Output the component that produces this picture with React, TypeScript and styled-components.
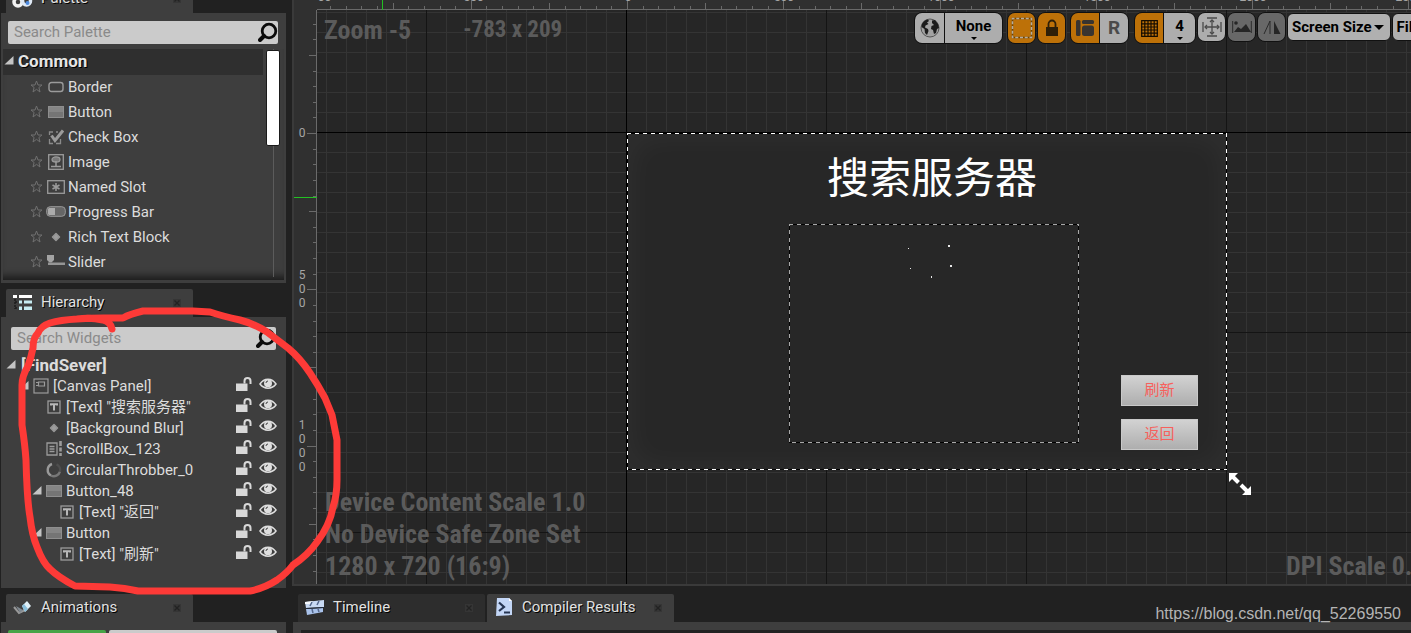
import React from "react";
import styled, { createGlobalStyle, css } from "styled-components";

const Global = createGlobalStyle`
  *, *::before, *::after { box-sizing: border-box; }
  html, body, #root { height: 100%; }
  body {
    margin: 0;
    background: #212121;
    color: #dcdcdc;
    font-family: Roboto, "Noto Sans CJK SC", sans-serif;
    font-size: 15px;
    line-height: 20px;
    overflow: hidden;
  }
  button, input { font: inherit; color: inherit; }
  button { border: 0; padding: 0; background: none; cursor: pointer; }
  ul { list-style: none; margin: 0; padding: 0; }
  svg { display: block; flex: none; }
`;

const panelGrey = "#3e3e3e";
const condensed = '"Roboto Condensed", "Liberation Sans Narrow", Roboto, sans-serif';

/* ---------- page frame ---------- */

const Editor = styled.div`
  position: relative;
  display: grid;
  grid-template-columns: 286px minmax(0, 1fr);
  column-gap: 6px;
  height: 100vh;
  overflow: hidden;
`;

const SideColumn = styled.div`
  display: flex;
  flex-direction: column;
  gap: 6px;
  padding-left: 1px;
  min-height: 0;
`;

const MainColumn = styled.div`
  display: flex;
  flex-direction: column;
  gap: 8px;
  min-width: 0;
  min-height: 0;
`;

const Dock = styled.section<{ $grow?: boolean; $cut?: boolean }>`
  display: flex;
  flex-direction: column;
  flex: ${(p) => (p.$grow ? "1 1 0" : "none")};
  min-height: 0;
  ${(p) => p.$cut && css`margin-top: -15px;`}
`;

const TabStrip = styled.div<{ $inset?: number }>`
  display: flex;
  gap: 2px;
  padding-left: ${(p) => p.$inset ?? 5}px;
`;

const TabBox = styled.div<{ $active: boolean }>`
  display: flex;
  align-items: center;
  width: 187px;
  height: 28px;
  padding: 0 10px 0 6px;
  border-radius: 2px 2px 0 0;
  background: ${(p) => (p.$active ? panelGrey : "#2d2d2d")};
`;

const TabLabel = styled.button`
  display: flex;
  align-items: center;
  gap: 7px;
  flex: 1;
  height: 24px;
  padding-bottom: 2px;
  text-align: left;
  color: #e2e2e2;
  text-shadow: 1px 1px 0 #000;
`;

const CloseButton = styled.button`
  width: 12px;
  height: 12px;
`;

const Panel = styled.div`
  flex: 1;
  min-height: 0;
  background: ${panelGrey};
`;

/* ---------- search ---------- */

const SearchBox = styled.label`
  display: flex;
  align-items: center;
  height: 23px;
  padding: 0 0 2px 6px;
  border-radius: 2px;
  background: #cbcbcb;
`;

const SearchInput = styled.input`
  flex: 1;
  min-width: 0;
  padding: 0;
  border: 0;
  outline: 0;
  background: transparent;
  color: #222;
  &::placeholder { color: #8a8a8a; opacity: 1; }
`;

/* ---------- palette ---------- */

const PalettePanel = styled(Panel)`
  display: flex;
  flex-direction: column;
  padding: 8px 2px 3px;
`;

const PaletteSearch = styled.div`
  padding: 0 6px 0 5px;
`;

const PaletteScroll = styled.div`
  display: flex;
  height: 231px;
  margin-top: 5px;
  box-shadow: inset 0 -9px 7px -5px #1c1c1c;
`;

const PaletteList = styled.div`
  width: 260px;
`;

const GroupHeader = styled.button`
  display: flex;
  align-items: center;
  gap: 4px;
  width: 100%;
  height: 26px;
  padding: 0 0 2px 1px;
  background: #2f2f2f;
  color: #e6e6e6;
  font-size: 17px;
  font-weight: 700;
  text-shadow: 1px 1px 0 #000;
`;

const PaletteItem = styled.button`
  display: flex;
  align-items: center;
  width: 100%;
  height: 25px;
  padding: 0 0 2px 27px;
  text-align: left;
`;

const IconSlot = styled.span<{ $w: number }>`
  display: flex;
  flex: none;
  align-items: center;
  justify-content: center;
  width: ${(p) => p.$w}px;
`;

const ScrollTrack = styled.div`
  width: 14px;
  height: 228px;
  margin-left: 3px;
  padding-top: 1px;
  background: linear-gradient(#5c5c5c, #5c5c5c) 7px 0 / 1px 100% no-repeat;
`;

const ScrollThumb = styled.div`
  height: 96px;
  border: 1px solid #1b1b1b;
  border-radius: 2px;
  background: #fff;
`;

/* ---------- hierarchy ---------- */

const HierarchyPanel = styled(Panel)`
  padding: 10px 9px 0 5px;
`;

const HierarchySearch = styled.div`
  padding: 0 1px 0 5px;
`;

const TreeRoot = styled.button`
  display: flex;
  align-items: center;
  gap: 5px;
  height: 20px;
  margin-top: 5px;
  font-size: 17px;
  font-weight: 700;
`;

const TreeRow = styled.li<{ $depth: number }>`
  display: flex;
  align-items: center;
  height: 21px;
  padding-left: ${(p) => p.$depth * 13}px;
`;

const TreeName = styled.button`
  flex: 1;
  text-align: left;
  white-space: nowrap;
`;

const RowTools = styled.span`
  display: flex;
  gap: 7px;
  padding-bottom: 4px;
`;

/* ---------- viewport ---------- */

const Viewport = styled.section`
  display: grid;
  flex: 1 1 0;
  min-height: 0;
  grid-template-columns: 23px minmax(0, 1fr);
  grid-template-rows: 10px minmax(0, 1fr);
  border-left: 2px solid #3a3a3a;
  border-bottom: 2px solid #3a3a3a;
  background: #303030;
`;

const RulerSvg = styled.svg`
  width: 100%;
  height: 100%;
  overflow: hidden;
  font-size: 12px;
  fill: #a6a6a6;
  text-anchor: middle;
`;

const Canvas = styled.div`
  position: relative;
  overflow: hidden;
  background-color: #262626;
  background-image:
    linear-gradient(#000, #000),
    linear-gradient(#000, #000),
    linear-gradient(90deg, #141414 1px, transparent 1px),
    linear-gradient(#141414 1px, transparent 1px),
    linear-gradient(90deg, #343434 1px, transparent 1px),
    linear-gradient(#343434 1px, transparent 1px);
  background-size: 1px 100%, 100% 1px, 200px 200px, 200px 200px, 20px 20px, 20px 20px;
  background-position: 309px 0, 0 122px, 309px 122px, 309px 122px, 309px 122px, 309px 122px;
  background-repeat: no-repeat, no-repeat, repeat, repeat, repeat, repeat;
`;

const CanvasInfo = styled.div`
  position: absolute;
  font-family: ${condensed};
  font-size: 26px;
  font-weight: 700;
  line-height: 32px;
  color: #5b5b5b;
  white-space: nowrap;
`;

const ZoomInfo = styled(CanvasInfo)`
  display: flex;
  align-items: center;
  gap: 52px;
  top: 4px;
  left: 7px;
`;

const CursorInfo = styled.span`
  font-size: 23px;
`;

const DeviceInfo = styled(CanvasInfo)`
  left: 8px;
  bottom: 2px;
`;

const DpiInfo = styled(CanvasInfo)`
  left: calc(100% - 125px);
  bottom: 2px;
`;

const Toolbar = styled.div`
  position: absolute;
  top: 2px;
  right: 0;
  display: flex;
  align-items: flex-start;
  width: 497px;
  gap: 1px;
  overflow: hidden;
`;

const ToolGroup = styled.div<{ $gap?: number }>`
  display: flex;
  flex: none;
  height: 32px;
  margin-right: ${(p) => p.$gap ?? 0}px;
  border: 1px solid #111;
  border-radius: 8px;
  overflow: hidden;
  background: #111;
  gap: 1px;
`;

const ToolButton = styled.button<{ $w: number; $tone?: "orange" | "dim" }>`
  display: flex;
  flex-direction: column;
  align-items: center;
  justify-content: center;
  gap: 2px;
  width: ${(p) => p.$w}px;
  background: ${(p) => (p.$tone === "orange" ? "#bd7108" : p.$tone === "dim" ? "#686868" : "#adadad")};
  color: #000;
  font-weight: 700;
  line-height: 18px;
`;

const SmallTool = styled(ToolGroup)`
  height: 30px;
`;

const RLetter = styled.span`
  font-size: 19px;
  color: #4a4a4a;
`;

const MenuButton = styled.button`
  display: flex;
  flex: none;
  align-items: center;
  gap: 2px;
  height: 28px;
  margin-top: 1px;
  padding: 0 6px 0 4px;
  border: 1px solid #111;
  border-radius: 6px;
  background: #b0b0b0;
  color: #000;
  font-weight: 700;
  white-space: nowrap;
`;

/* ---------- widget being designed ---------- */

const Artboard = styled.div`
  position: absolute;
  left: 310px;
  top: 123px;
  width: 600px;
  height: 337px;
  background: #272727;
  box-shadow: inset 0 0 36px rgba(255, 255, 255, 0.05);
`;

const Outline = styled.svg`
  position: absolute;
  inset: 0;
  width: 100%;
  height: 100%;
`;

const ArtTitle = styled.h1`
  position: absolute;
  left: 200px;
  top: 12px;
  margin: 0;
  font-family: "Noto Sans CJK SC", sans-serif;
  font-size: 42px;
  font-weight: 400;
  line-height: 60px;
  color: #fff;
`;

const ScrollArea = styled.div`
  position: absolute;
  left: 162px;
  top: 91px;
  width: 290px;
  height: 219px;
`;

const ArtButtons = styled.div`
  position: absolute;
  left: 494px;
  top: 242px;
  display: grid;
  gap: 13px;
`;

const ArtButton = styled.button`
  width: 77px;
  height: 31px;
  padding-bottom: 3px;
  border: 1px solid #c9c9c9;
  background: linear-gradient(#d2d2d2, #aeaeae);
  color: #f7605c;
  font-family: "Noto Sans CJK SC", sans-serif;
`;

const ResizeHandle = styled.svg`
  position: absolute;
  left: 912px;
  top: 463px;
`;

/* ---------- bottom docks ---------- */

const AnimationsPanel = styled(Panel)`
  display: flex;
  gap: 3px;
  height: 11px;
  flex: none;
  padding: 8px 9px 0 7px;
  overflow: hidden;
`;

const AddAnimation = styled.button`
  width: 98px;
  height: 23px;
  border-radius: 2px;
  background: #47a447;
`;

const AnimationFilter = styled.input`
  flex: 1;
  min-width: 0;
  height: 23px;
  border: 0;
  border-radius: 2px;
  background: #cbcbcb;
`;

const ResultsPanel = styled(Panel)`
  flex: none;
  height: 11px;
  margin-left: 1px;
  padding: 8px 0 0 8px;
  overflow: hidden;
`;

const ResultsLog = styled.div`
  height: 40px;
  background: #222;
`;

const Watermark = styled.a`
  position: absolute;
  right: 10px;
  bottom: 9px;
  font-family: "Liberation Sans", Arial, sans-serif;
  font-size: 16px;
  color: #b4b4b4;
  text-decoration: none;
`;

const Annotation = styled.svg`
  position: absolute;
  left: 0;
  top: 0;
  pointer-events: none;
`;

/* ---------- icons ---------- */

const Magnifier = () => (
  <svg width="20" height="20" viewBox="0 0 20 20" fill="none" stroke="#0b0b0b">
    <circle cx="11" cy="9" r="6.8" strokeWidth="2.8" />
    <path d="M6 14 2 18" strokeWidth="4" strokeLinecap="round" />
  </svg>
);

const Expander = ({ hidden = false }: { hidden?: boolean }) => (
  <svg width="10" height="10" viewBox="0 0 10 10">
    {!hidden && <path d="M9.5 0V8.500H.5z" fill="#c4c4c4" />}
  </svg>
);

const Star = () => (
  <svg width="13" height="13" viewBox="0 0 13 13" fill="none" stroke="#707070">
    <path d="M6.5 1 8 5h4L8.900 7.500 10 12 6.500 9.300 3 12 4.100 7.500 1 5h4z" />
  </svg>
);

const Cross = () => (
  <svg width="12" height="12" viewBox="0 0 12 12">
    <path d="M2 2h8v8H2z" fill="#353535" />
    <path d="M3.500 3.500l5 5M8.500 3.500l-5 5" stroke="#222" strokeWidth="1.300" />
  </svg>
);

type Kind =
  | "border" | "button" | "check" | "image" | "slot" | "progress" | "dot" | "slider"
  | "canvas" | "text" | "scroll" | "throbber";

const WidgetIcon = ({ kind }: { kind: Kind }) => {
  switch (kind) {
    case "border":
      return <svg width="16" height="12" viewBox="0 0 16 12"><rect x="1" y="1.500" width="14" height="9" rx="2.500" fill="none" stroke="#9b9b9b" strokeWidth="1.400" /></svg>;
    case "button":
      return (
        <svg width="16" height="12" viewBox="0 0 16 12">
          <rect x=".5" y=".5" width="15" height="11" fill="#858585" stroke="#8e8e8e" />
          <path d="M1 6h14v5H1z" fill="#757575" />
        </svg>
      );
    case "check":
      return (
        <svg width="16" height="16" viewBox="0 0 16 16" fill="none" stroke="#9b9b9b">
          <path d="M5 3H1.500V6M1.500 10v4.500H5M8 14.500h4.500V10M8 3h2" stroke="#8a8a8a" strokeWidth="1.300" />
          <path d="M3.500 6.500l3.500 5L15 1.500" strokeWidth="3" />
        </svg>
      );
    case "image":
      return (
        <svg width="16" height="16" viewBox="0 0 16 16" fill="none" stroke="#9b9b9b">
          <rect x=".7" y=".7" width="14.600" height="14.600" strokeWidth="1.300" />
          <ellipse cx="8" cy="5.500" rx="4" ry="2.600" fill="#777" strokeWidth="1.200" />
          <path d="M8 7v5M3 12.500h10" strokeWidth="1.500" />
        </svg>
      );
    case "slot":
      return (
        <svg width="18" height="14" viewBox="0 0 18 14" fill="none" stroke="#9b9b9b">
          <rect x=".7" y=".7" width="16.600" height="12.600" strokeWidth="1.300" />
          <path d="M9 3v8M5.500 5l7 4M12.500 5l-7 4" strokeWidth="1.500" />
        </svg>
      );
    case "progress":
      return (
        <svg width="20" height="11" viewBox="0 0 20 11">
          <rect x=".7" y=".7" width="18.600" height="9.600" rx="3.500" fill="#666" stroke="#9a9a9a" />
          <path d="M3 2h6v7H3a2 2 0 0 1-1-1V3z" fill="#ababab" />
        </svg>
      );
    case "dot":
      return <svg width="10" height="10" viewBox="0 0 10 10"><path d="M5 1.500 8.500 5 5 8.500 1.500 5z" fill="#9d9d9d" stroke="#959595" strokeWidth="1.500" strokeLinejoin="round" /></svg>;
    case "slider":
      return (
        <svg width="18" height="14" viewBox="0 0 18 14" fill="#a3a3a3">
          <path d="M0 0h7v5L4.500 7.500h-2L0 5z" />
          <path d="M1 7.500h17v2.500H1z" fill="#959595" />
        </svg>
      );
    case "canvas":
      return (
        <svg width="16" height="16" viewBox="0 0 16 16" fill="none" stroke="#9b9b9b">
          <rect x="1" y="1" width="14" height="14" strokeWidth="1.200" />
          <path d="M3 4.500h2M3 7.500h2M5.500 4h6v4h-6z" strokeWidth="1.200" />
        </svg>
      );
    case "text":
      return (
        <svg width="14" height="14" viewBox="0 0 14 14" fill="none" stroke="#9b9b9b">
          <rect x="1" y="1" width="12" height="12" strokeWidth="1.300" />
          <path d="M4 5.500V4.300h6v1.200M7 4v6.500" stroke="#b8b8b8" strokeWidth="2" />
        </svg>
      );
    case "scroll":
      return (
        <svg width="17" height="16" viewBox="0 0 17 16" fill="none" stroke="#9b9b9b">
          <path d="M1 2h10v12H1zM3.500 5.500h5M3.500 8h5M3.500 10.500h5" strokeWidth="1.300" />
          <path d="M14.500 0v5M14.500 6.500v4M14.500 12v3" strokeWidth="2.600" />
        </svg>
      );
    case "throbber":
      return (
        <svg width="16" height="16" viewBox="0 0 16 16" fill="none" strokeWidth="2.400">
          <path d="M6 2A6.300 6.300 0 0 0 5 13.500" stroke="#999" />
          <path d="M5 13.500A6.300 6.300 0 0 0 14 9.500" stroke="#777" />
          <path d="M14 9.500A6.300 6.300 0 0 0 10.500 2.300" stroke="#4e4e4e" />
        </svg>
      );
  }
};

const OpenLock = () => (
  <svg width="16" height="14" viewBox="0 0 16 14">
    <path d="M0 6.500h11.500V14H0z" fill="#d8d8d8" />
    <path d="M8.500 6.500V4a3 3 0 0 1 6 0v3" fill="none" stroke="#d8d8d8" strokeWidth="2" />
  </svg>
);

const Eye = () => (
  <svg width="18" height="14" viewBox="0 0 18 14">
    <path d="M1 7C5 .5 13 .5 17 7 13 12.500 5 12.500 1 7z" fill="none" stroke="#dedede" strokeWidth="1.500" />
    <circle cx="9" cy="6.300" r="4" fill="#dedede" />
    <path d="M7 6a2 2 0 0 1 2-2" fill="none" stroke="#444" />
  </svg>
);

const PaletteTabIcon = () => (
  <svg width="22" height="20" viewBox="0 0 22 20" fill="none">
    <circle cx="6" cy="14" r="4" stroke="#f2f2f2" strokeWidth="3.500" />
    <circle cx="14.500" cy="13" r="4" stroke="#dfe9f5" strokeWidth="3.500" />
    <circle cx="15.500" cy="15" r="2" fill="#4c8ae0" />
  </svg>
);

const HierarchyTabIcon = () => (
  <svg width="22" height="18" viewBox="0 0 22 18">
    <path d="M1 2h4v3H1zM7 2h13v3H7z" fill="#fff" />
    <path d="M7 7.500h3v3H7zM12 7.500h8v3h-8zM7 13.500h3v3.500H7zM12 13.500h8v3.500h-8z" fill="#c6ecf2" />
    <path d="M3 6v10M3 9h3M3 15h3" stroke="#1c1c1c" strokeWidth="1.500" strokeDasharray="2 1" fill="none" />
  </svg>
);

const AnimationsTabIcon = () => (
  <svg width="22" height="20" viewBox="0 0 22 20">
    <path d="M2 10l5 6 8-4" fill="none" stroke="#999" strokeWidth="2" />
    <path d="M4 9l4 7 3-3" fill="#7f8890" />
    <path d="M10 9l5-5 4 5-6 6z" fill="#dff0f8" />
    <path d="M10 9l2-2 4 5-3 3z" fill="#89bfdc" />
  </svg>
);

const TimelineTabIcon = () => (
  <svg width="22" height="18" viewBox="0 0 22 18">
    <path d="M1 4l19-2v7L2 10z" fill="#c9daf3" />
    <path d="M2 11l17-1v4L3 17z" fill="#a9c2ea" />
    <path d="M1 4l8-1-3 3H1z" fill="#f6faff" />
    <path d="M8 4l-2 4M15 3l-2 4M8 11l1 4M14 11l1 3" stroke="#55688c" strokeWidth="1.500" />
    <path d="M2 10.500l18-1" stroke="#202a3c" />
  </svg>
);

const CompilerTabIcon = () => (
  <svg width="22" height="20" viewBox="0 0 22 20">
    <path d="M4 1h12l3 3v14L3 19z" fill="#c3d6f6" />
    <path d="M16 1l3 3h-3z" fill="#fff" />
    <path d="M6 5.500l5 4.500L6 14M11 15.500h6" fill="none" stroke="#263552" strokeWidth="2.200" />
  </svg>
);

const Globe = () => (
  <svg width="20" height="20" viewBox="0 0 20 20">
    <circle cx="10" cy="10" r="9" fill="#a2a2a2" stroke="#555" />
    <path d="M2 6c2-3.500 4-4.500 6-4.500l1 1.500-2 1.500 1.500 1.500-3 1.500L5 9.500l3 1.500.5 2L7 17l-2-2-.5-4L1.500 9z" fill="#1c1c1c" />
    <path d="M12 2.500l3-.5 3 4 1 4-2 1-1 4-2 1-1-4-2-1 .5-3 2.500-1-2-2z" fill="#1c1c1c" />
  </svg>
);

const Caret = ({ w }: { w: number }) => (
  <svg width={w} height={w / 2} viewBox="0 0 10 5"><path d="M0 0h10L5 5z" fill="#000" /></svg>
);

const DashedBox = () => (
  <svg width="22" height="22" viewBox="0 0 22 22" fill="none" strokeWidth="1.500">
    <rect x="1.500" y="1.500" width="19" height="19" stroke="#6b4408" />
    <rect x="1.500" y="1.500" width="19" height="19" stroke="#b3aca0" strokeDasharray="3 1.750" strokeDashoffset="1" />
  </svg>
);

const Lock = () => (
  <svg width="14" height="18" viewBox="0 0 14 18">
    <path d="M1 8h12v9H1z" fill="#2d1f08" />
    <path d="M3.500 8V5a3.500 3.500 0 0 1 7 0v3" fill="none" stroke="#2d1f08" strokeWidth="1.800" />
  </svg>
);

const LayoutIcon = () => (
  <svg width="19" height="16" viewBox="0 0 19 16" fill="#383430">
    <rect x="0" y="0" width="4.500" height="16" rx="1.500" />
    <rect x="6" y="0" width="12" height="4" rx="1.500" />
    <rect x="6" y="5.500" width="12" height="10.500" rx="2.500" />
  </svg>
);

const GridIcon = () => (
  <svg width="17" height="17" viewBox="0 0 17 17">
    <path d="M.7 .7h15.600v15.600H.7zM3.800 0v17M7 0v17M10 0v17M13.200 0v17M0 3.800h17M0 7h17M0 10h17M0 13.200h17" fill="none" stroke="#140c00" strokeWidth="1.200" />
  </svg>
);

const SpreadIcon = () => (
  <svg width="20" height="20" viewBox="0 0 20 20" fill="none" stroke="#4a4a4a" strokeWidth="1.300">
    <path d="M5 1h10M5 19h10M1 5v10M19 5v10M10 3v14M3 10h14" />
    <path d="M8 5l2-2 2 2M8 15l2 2 2-2M5 8l-2 2 2 2M15 8l2 2-2 2" />
  </svg>
);

const PictureIcon = () => (
  <svg width="20" height="14" viewBox="0 0 20 14">
    <path d="M.7 1v12M19.300 1v12" stroke="#2a2a2a" />
    <path d="M2 12l4-5 3 2 5-5 5 8z" fill="#262626" />
    <circle cx="4" cy="3" r="1.800" fill="#262626" />
  </svg>
);

const MirrorIcon = () => (
  <svg width="18" height="15" viewBox="0 0 18 15">
    <path d="M7 1L1 14M7 1v13" fill="none" stroke="#2a2a2a" />
    <path d="M11 1l6.500 13H11z" fill="#262626" />
  </svg>
);

/* ---------- data ---------- */

const paletteItems: { name: string; kind: Kind }[] = [
  { name: "Border", kind: "border" },
  { name: "Button", kind: "button" },
  { name: "Check Box", kind: "check" },
  { name: "Image", kind: "image" },
  { name: "Named Slot", kind: "slot" },
  { name: "Progress Bar", kind: "progress" },
  { name: "Rich Text Block", kind: "dot" },
  { name: "Slider", kind: "slider" },
];

const treeItems: { name: string; kind: Kind; depth: number; open?: boolean }[] = [
  { name: "[Canvas Panel]", kind: "canvas", depth: 1, open: true },
  { name: '[Text] "搜索服务器"', kind: "text", depth: 2 },
  { name: "[Background Blur]", kind: "dot", depth: 2 },
  { name: "ScrollBox_123", kind: "scroll", depth: 2 },
  { name: "CircularThrobber_0", kind: "throbber", depth: 2 },
  { name: "Button_48", kind: "button", depth: 2, open: true },
  { name: '[Text] "返回"', kind: "text", depth: 3 },
  { name: "Button", kind: "button", depth: 2, open: true },
  { name: '[Text] "刷新"', kind: "text", depth: 3 },
];

/* Ruler ticks: one every 50 units, 500 units span 156.25 px. */
const ticksFrom = (first: number, last: number) =>
  Array.from({ length: last - first + 1 }, (_, i) => first + i);
const topTicks = ticksFrom(-20, 120);
const sideTicks = ticksFrom(-7, 80);
const lastSideLabel = 20;
const tickAt = (origin: number, k: number) => Math.round(origin + k * 15.625);

const TopRuler = () => (
  <RulerSvg>
    {topTicks.map((k) => {
      const x = tickAt(311, k);
      const len = k % 10 === 0 ? 9 : k % 5 === 0 ? 6 : 3;
      return (
        <g key={k}>
          <rect x={x - 1} y={9 - len} width="1" height={len} fill="#6a6a6a" />
          {k % 10 === 0 && k <= 70 && <text x={x} y="1">{k * 50}</text>}
        </g>
      );
    })}
    <rect y="9" width="100%" height="1" fill="#6a6a6a" />
    <rect x="65" width="1" height="10" fill="#23c023" />
  </RulerSvg>
);

const SideRuler = () => (
  <RulerSvg>
    {sideTicks.map((k) => {
      const y = tickAt(123, k);
      const len = k % 10 === 0 ? 9 : k % 5 === 0 ? 7 : 3;
      const digits = k % 10 === 0 && k <= lastSideLabel ? String(k * 50).split("") : [];
      return (
        <g key={k}>
          <rect x={22 - len} y={y} width={len} height="1" fill="#6a6a6a" />
          {digits.map((d, i) => (
            <text key={i} x="8" y={y + 4 + i * 14 - (digits.length - 1) * 7}>{d}</text>
          ))}
        </g>
      );
    })}
    <rect x="22" width="1" height="100%" fill="#6a6a6a" />
    <rect y="187" width="23" height="1" fill="#23c023" />
  </RulerSvg>
);

const Tab = ({ icon, label, active = true }: { icon: React.ReactNode; label: string; active?: boolean }) => (
  <TabBox $active={active}>
    <TabLabel type="button">{icon}{label}</TabLabel>
    <CloseButton type="button" aria-label={`Close ${label}`}><Cross /></CloseButton>
  </TabBox>
);

const Dashes = ({ color }: { color: string }) => (
  <Outline>
    <rect x="0" y="0" width="100%" height="100%" fill="none" stroke="#000" strokeWidth="2" />
    <rect x="0" y="0" width="100%" height="100%" fill="none" stroke={color} strokeWidth="2" strokeDasharray="4 4" />
  </Outline>
);

export default function App() {
  return (
    <>
      <Global />
      <Editor>
        <SideColumn>
          <Dock $cut>
            <TabStrip><Tab icon={<PaletteTabIcon />} label="Palette" /></TabStrip>
            <PalettePanel>
              <PaletteSearch>
                <SearchBox>
                  <SearchInput placeholder="Search Palette" aria-label="Search Palette" />
                  <Magnifier />
                </SearchBox>
              </PaletteSearch>
              <PaletteScroll>
                <PaletteList>
                  <GroupHeader type="button"><Expander />Common</GroupHeader>
                  {paletteItems.map((item) => (
                    <PaletteItem key={item.name} type="button">
                      <Star />
                      <IconSlot $w={25}><WidgetIcon kind={item.kind} /></IconSlot>
                      {item.name}
                    </PaletteItem>
                  ))}
                </PaletteList>
                <ScrollTrack><ScrollThumb /></ScrollTrack>
              </PaletteScroll>
            </PalettePanel>
          </Dock>

          <Dock $grow>
            <TabStrip><Tab icon={<HierarchyTabIcon />} label="Hierarchy" /></TabStrip>
            <HierarchyPanel>
              <HierarchySearch>
                <SearchBox>
                  <SearchInput placeholder="Search Widgets" aria-label="Search Widgets" />
                  <Magnifier />
                </SearchBox>
              </HierarchySearch>
              <TreeRoot type="button"><Expander />[FindSever]</TreeRoot>
              <ul>
                {treeItems.map((item, i) => (
                  <TreeRow key={i} $depth={item.depth}>
                    <Expander hidden={!item.open} />
                    <IconSlot $w={24}><WidgetIcon kind={item.kind} /></IconSlot>
                    <TreeName type="button">{item.name}</TreeName>
                    <RowTools>
                      <button type="button" aria-label={`Lock ${item.name}`}><OpenLock /></button>
                      <button type="button" aria-label={`Show ${item.name}`}><Eye /></button>
                    </RowTools>
                  </TreeRow>
                ))}
              </ul>
            </HierarchyPanel>
          </Dock>

          <Dock>
            <TabStrip><Tab icon={<AnimationsTabIcon />} label="Animations" /></TabStrip>
            <AnimationsPanel>
              <AddAnimation type="button" aria-label="Add animation" />
              <AnimationFilter aria-label="Search animations" />
            </AnimationsPanel>
          </Dock>
        </SideColumn>

        <MainColumn>
          <Viewport>
            <div />
            <TopRuler />
            <SideRuler />
            <Canvas>
              <ZoomInfo>Zoom -5<CursorInfo>-783 x 209</CursorInfo></ZoomInfo>
              <DeviceInfo>
                <div>Device Content Scale 1.0</div>
                <div>No Device Safe Zone Set</div>
                <div>1280 x 720 (16:9)</div>
              </DeviceInfo>
              <DpiInfo>DPI Scale 0.67</DpiInfo>

              <Artboard>
                <Dashes color="#fff" />
                <ArtTitle>搜索服务器</ArtTitle>
                <ScrollArea>
                  <Dashes color="#a8a8a8" />
                  <svg width="289" height="70" fill="#e8e8e8">
                    <path d="M119 24h1v1h-1zM159 21h2v2h-2zM161 41h2v2h-2zM121 44h1v1h-1zM142 52h1v2h-1z" />
                  </svg>
                </ScrollArea>
                <ArtButtons>
                  <ArtButton type="button">刷新</ArtButton>
                  <ArtButton type="button">返回</ArtButton>
                </ArtButtons>
              </Artboard>

              <ResizeHandle width="22" height="22" viewBox="0 0 22 22">
                <path d="M0 0h9L0 9zM22 22h-9l9-9z" fill="#fff" />
                <path d="M3 3l6.500 6.500M12 12l7 7" stroke="#fff" strokeWidth="4" />
              </ResizeHandle>

              <Toolbar>
                <ToolGroup $gap={3}>
                  <ToolButton type="button" $w={29} aria-label="Localization"><Globe /></ToolButton>
                  <ToolButton type="button" $w={57}>None<Caret w={6} /></ToolButton>
                </ToolGroup>
                <ToolGroup><ToolButton type="button" $w={27} $tone="orange" aria-label="Outlines"><DashedBox /></ToolButton></ToolGroup>
                <ToolGroup $gap={3}><ToolButton type="button" $w={27} $tone="orange" aria-label="Respect locks"><Lock /></ToolButton></ToolGroup>
                <ToolGroup $gap={4}>
                  <ToolButton type="button" $w={28} $tone="orange" aria-label="Layout transform"><LayoutIcon /></ToolButton>
                  <ToolButton type="button" $w={28}><RLetter>R</RLetter></ToolButton>
                </ToolGroup>
                <ToolGroup>
                  <ToolButton type="button" $w={28} $tone="orange" aria-label="Grid snapping"><GridIcon /></ToolButton>
                  <ToolButton type="button" $w={31}>4<Caret w={6} /></ToolButton>
                </ToolGroup>
                <SmallTool><ToolButton type="button" $w={27} aria-label="Zoom to fit"><SpreadIcon /></ToolButton></SmallTool>
                <SmallTool><ToolButton type="button" $w={27} $tone="dim" aria-label="Preview background"><PictureIcon /></ToolButton></SmallTool>
                <SmallTool><ToolButton type="button" $w={27} $tone="dim" aria-label="Flip preview"><MirrorIcon /></ToolButton></SmallTool>
                <MenuButton type="button">Screen Size<Caret w={10} /></MenuButton>
                <MenuButton type="button">Fill Screen<Caret w={10} /></MenuButton>
              </Toolbar>
            </Canvas>
          </Viewport>

          <Dock>
            <TabStrip $inset={6}>
              <Tab icon={<TimelineTabIcon />} label="Timeline" active={false} />
              <Tab icon={<CompilerTabIcon />} label="Compiler Results" />
            </TabStrip>
            <ResultsPanel><ResultsLog /></ResultsPanel>
          </Dock>
        </MainColumn>

        <Annotation width="350" height="610" viewBox="0 0 350 610">
          <path
            d="M112 329Q110 321 103 320Q90 317 77 319Q60 320 50 323Q41 326 38 333Q33 338 33 348Q31 358 28 366Q22 376 22 385V425Q25 445 26 460Q27 500 30 517Q32 535 37 547Q43 563 50 569Q58 577 75 586L110 587Q125 588 138 591H250Q265 588 277 580Q287 573 293 565Q308 555 317 542Q330 525 333 507Q337 495 337 480V440L332 415L325 398Q318 385 310 373Q300 358 288 348L267 332Q255 324 240 320Q222 316 210 312L193 311H143Q130 314 123 318H103Q90 318 77 319"
            fill="none"
            stroke="#fd3a37"
            strokeWidth="7"
            strokeLinecap="round"
            strokeLinejoin="round"
          />
        </Annotation>
        <Watermark href="https://blog.csdn.net/qq_52269550">https://blog.csdn.net/qq_52269550</Watermark>
      </Editor>
    </>
  );
}
